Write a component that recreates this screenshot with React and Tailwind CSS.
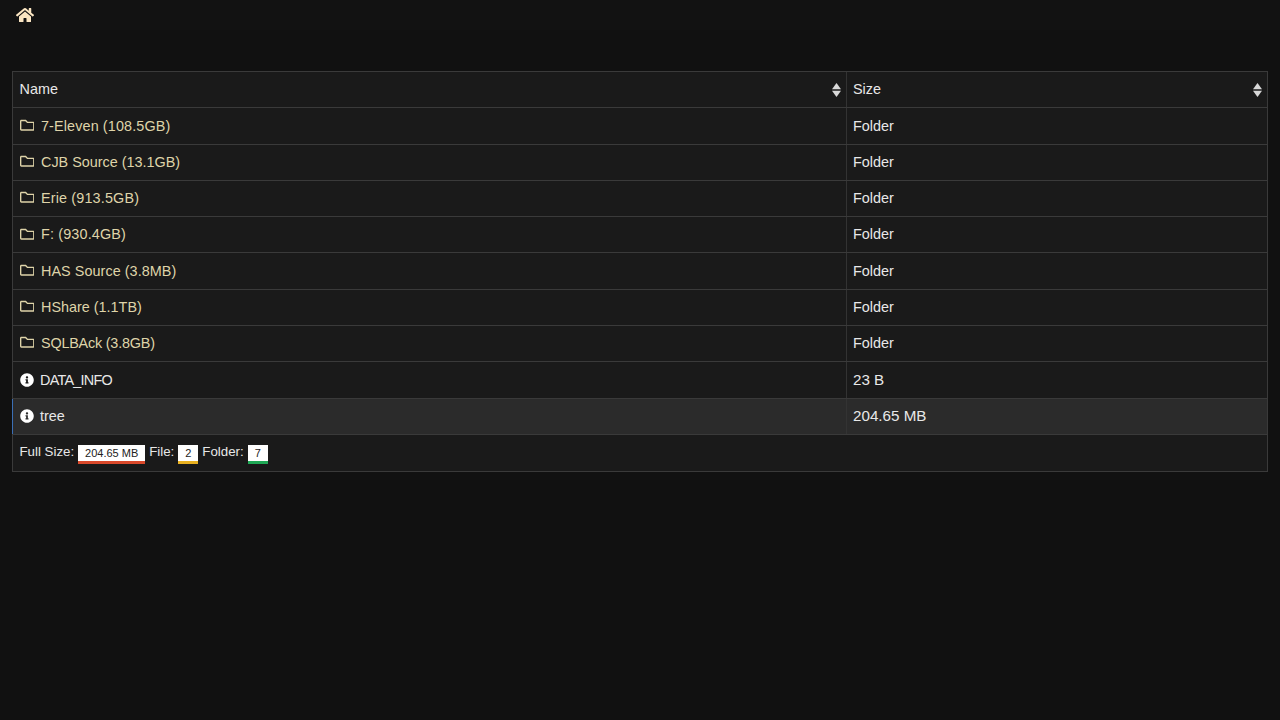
import React from 'react';
import { FaHome, FaRegFolder, FaInfoCircle } from 'react-icons/fa';

const folders = [
  { name: '7-Eleven (108.5GB)', fit: 'tracking-[0.12px]' },
  { name: 'CJB Source (13.1GB)', fit: '' },
  { name: 'Erie (913.5GB)', fit: 'tracking-[0.15px]' },
  { name: 'F: (930.4GB)', fit: 'tracking-[0.15px]' },
  { name: 'HAS Source (3.8MB)', fit: 'tracking-[0.05px]' },
  { name: 'HShare (1.1TB)', fit: '' },
  { name: 'SQLBAck (3.8GB)', fit: 'tracking-[-0.2px]' },
];

const SortIcon = () => (
  <svg width="9" height="14" viewBox="0 0 9 14" className="text-[#d8d8d8]" fill="currentColor">
    <path d="M4.5 0 L9 6.2 H0 Z" />
    <path d="M4.5 14 L9 7.8 H0 Z" />
  </svg>
);

const Row = ({ name, size, active, children }) => (
  <div className={`flex h-[36.3px] border-t border-[#3a3a3a] ${active ? 'bg-[#2b2b2b]' : ''}`}>
    <div
      className={`flex items-center border-r border-[#333333] ${
        active ? 'w-[835px] -ml-px pl-[6.5px] border-l border-l-[#3b6fb5]' : 'w-[834px] pl-[6.5px]'
      }`}
    >
      {children}
      <span className="pt-px">{name}</span>
    </div>
    <div className="flex-1 flex items-center pl-[6px] pt-px text-[#e8e8e8]">{size}</div>
  </div>
);

const Badge = ({ text, color, width }) => (
  <span className={`inline-flex items-center justify-center h-[19px] mt-[3px] bg-white text-[#222222] text-[11px] border-b-[3px] ${color} ${width}`}>
    {text}
  </span>
);

const App = () => {
  return (
    <div className="min-h-screen bg-[#111111] font-['Liberation_Sans',Arial,sans-serif] text-[14.4px] text-[#e8e8e8]">
      <div className="h-[30px] pl-4 flex items-center bg-[#121212]">
        <FaHome className="text-[#fbe6c2] text-[18px]" />
      </div>

      <div className="pt-[41px] px-3">
        <div className="border border-[#3a3a3a] bg-[#1a1a1a]">
          <div className="flex h-[35.25px]">
            <div className="w-[834px] flex items-center justify-between pl-[6.5px] pr-[5px] border-r border-[#333333]">
              <span>Name</span>
              <SortIcon />
            </div>
            <div className="flex-1 flex items-center justify-between pl-[6px] pr-[5px]">
              <span>Size</span>
              <SortIcon />
            </div>
          </div>

          {folders.map((f) => (
            <Row
              key={f.name}
              name={<span className={`text-[#dfd4a9] ${f.fit}`}>{f.name}</span>}
              size="Folder"
            >
              <FaRegFolder className="text-[#dfd4a9] text-[14.5px] mr-[7px] mb-[2px]" />
            </Row>
          ))}

          <Row
            name={<span className="tracking-[-0.75px]">DATA_INFO</span>}
            size={<span className="text-[15.2px]">23 B</span>}
          >
            <FaInfoCircle className="text-white text-[14px] mr-[6.5px]" />
          </Row>
          <Row
            name="tree"
            size={<span className="text-[15.2px]">204.65 MB</span>}
            active
          >
            <FaInfoCircle className="text-white text-[14px] mr-[6.5px]" />
          </Row>

          <div className="h-[36.7px] border-t border-[#3a3a3a] flex items-center pl-[6.5px] gap-[4px] text-[13.3px]">
            <span className="mb-[2px]">Full Size:</span>
            <Badge text="204.65 MB" color="border-[#d9492b]" width="w-[67px]" />
            <span className="mb-[2px]">File:</span>
            <Badge text="2" color="border-[#e8b020]" width="w-[20px]" />
            <span className="mb-[2px]">Folder:</span>
            <Badge text="7" color="border-[#1fa855]" width="w-[20px]" />
          </div>
        </div>
      </div>
    </div>
  );
};

export default App;
